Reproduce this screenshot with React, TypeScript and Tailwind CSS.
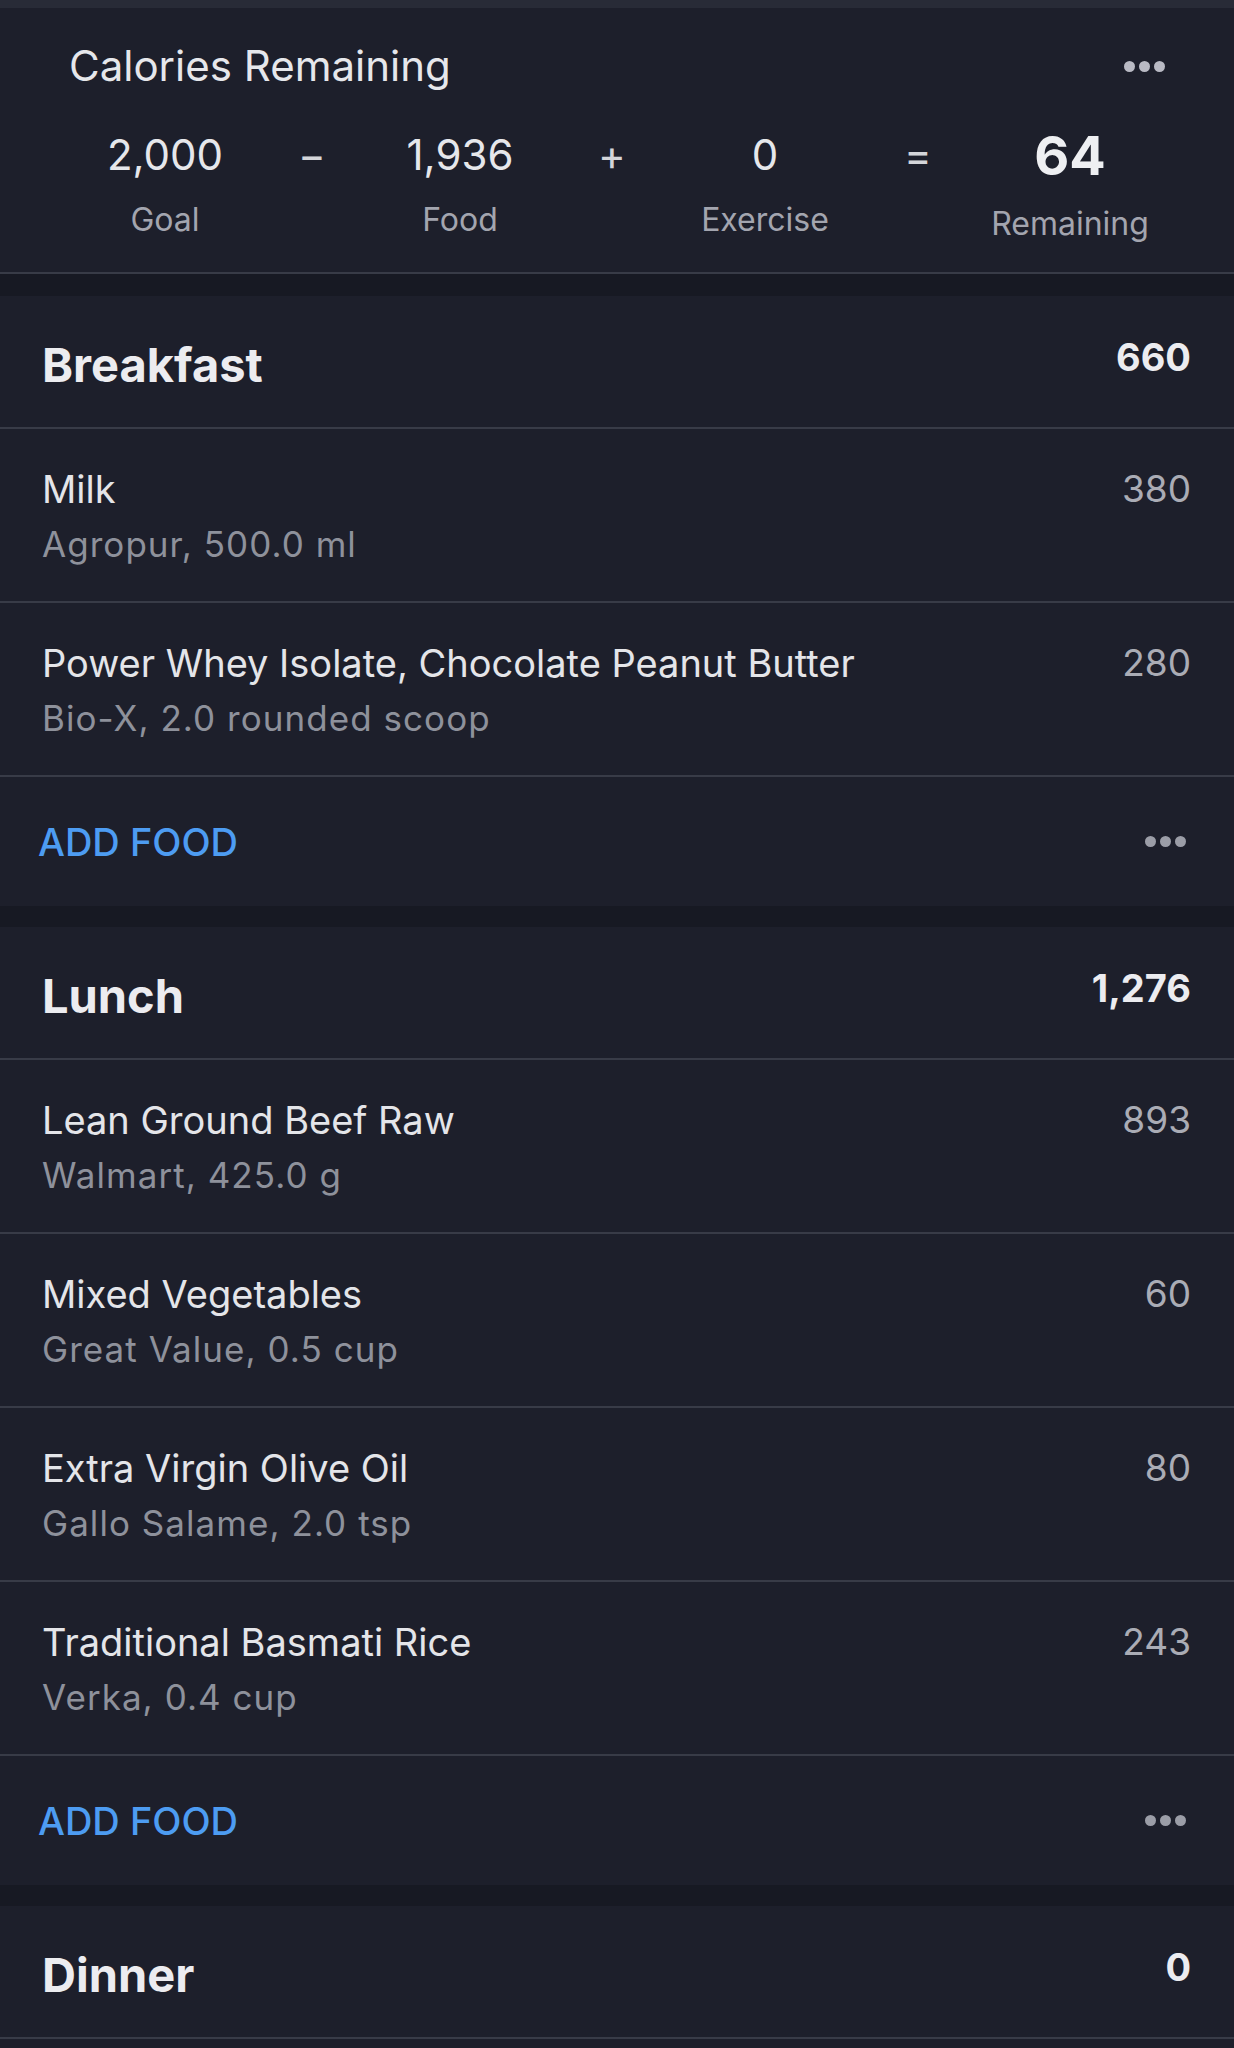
import * as React from 'react';

type Food = { name: string; detail: string; cal: string };

const breakfast: Food[] = [
  { name: 'Milk', detail: 'Agropur, 500.0 ml', cal: '380' },
  { name: 'Power Whey Isolate, Chocolate Peanut Butter', detail: 'Bio-X, 2.0 rounded scoop', cal: '280' },
];

const lunch: Food[] = [
  { name: 'Lean Ground Beef Raw', detail: 'Walmart, 425.0 g', cal: '893' },
  { name: 'Mixed Vegetables', detail: 'Great Value, 0.5 cup', cal: '60' },
  { name: 'Extra Virgin Olive Oil', detail: 'Gallo Salame, 2.0 tsp', cal: '80' },
  { name: 'Traditional Basmati Rice', detail: 'Verka, 0.4 cup', cal: '243' },
];

const Dots = ({ color }: { color: string }) => (
  <div className="flex items-center gap-[4px]">
    <span className={`block h-[11px] w-[11px] rounded-full ${color}`} />
    <span className={`block h-[11px] w-[11px] rounded-full ${color}`} />
    <span className={`block h-[11px] w-[11px] rounded-full ${color}`} />
  </div>
);

const Stat = ({ value, label, big }: { value: string; label: string; big?: boolean }) => (
  <div className="flex flex-col items-center">
    {big ? (
      <div className="mt-[3px] text-[54px] font-bold leading-none text-[#eeeff2]">{value}</div>
    ) : (
      <div className="mt-[8px] text-[42px] leading-none text-[#e6e7eb]">{value}</div>
    )}
    <div className={`${big ? 'mt-[25px]' : 'mt-[28px]'} text-[32px] leading-none text-[#a3a5af]`}>{label}</div>
  </div>
);

const Op = ({ sign }: { sign: string }) => (
  <div className="flex justify-center">
    <div className="mt-[8px] text-[42px] leading-none text-[#d4d5da]">{sign}</div>
  </div>
);

const MealSection = ({
  title,
  total,
  foods,
  last,
  first,
}: {
  title: string;
  total: string;
  foods: Food[];
  last?: boolean;
  first?: boolean;
}) => (
  <section className={`${first ? 'mt-[22px]' : 'mt-[21px]'} bg-[#1d1f2b]`}>
    <div className="flex h-[133px] items-start justify-between border-b-2 border-[#383b47] pl-[42px] pr-[43px] pt-[42px]">
      <h2 className="mt-[3px] text-[47px] font-bold leading-none text-[#ececf0]">{title}</h2>
      <span className="text-[38px] font-bold leading-none text-[#ececf0]">{total}</span>
    </div>
    {foods.map((food, index) => (
      <div
        key={index}
        className="flex h-[174px] items-start justify-between border-b-2 border-[#383b47] pl-[42px] pr-[43px] pt-[38px]"
      >
        <div>
          <div className="text-[38px] leading-[44px] text-[#e4e5e9]">{food.name}</div>
          <div className="mt-[13px] text-[35px] leading-[40px] tracking-[0.03em] text-[#8e919b]">{food.detail}</div>
        </div>
        <span className="text-[37px] leading-[44px] text-[#aaacb5]">{food.cal}</span>
      </div>
    ))}
    {last ? (
      <div className="h-[80px]" />
    ) : (
      <div className="flex h-[129px] items-center justify-between pl-[38px] pr-[48px]">
        <span className="text-[38px] font-medium leading-none text-[#4d9cf2]">ADD FOOD</span>
        <Dots color="bg-[#9b9da7]" />
      </div>
    )}
  </section>
);

export default function App() {
  return (
    <div className="min-h-screen bg-[#171923] pb-10 font-['Inter','Liberation_Sans',sans-serif]">
      <div className="h-[8px] bg-[#282b37]" />
      <section className="h-[266px] border-b-2 border-[#383b47] bg-[#1d1f2b]">
        <div className="flex items-center justify-between pl-[69px] pr-[69px] pt-[37px]">
          <h1 className="text-[42px] leading-none text-[#e6e7eb]">Calories Remaining</h1>
          <Dots color="bg-[#b9bac4]" />
        </div>
        <div className="mt-[39px] grid grid-cols-[152px_142px_154px_150px_156px_150px_154px] pl-[89px]">
          <Stat value="2,000" label="Goal" />
          <Op sign="−" />
          <Stat value="1,936" label="Food" />
          <Op sign="+" />
          <Stat value="0" label="Exercise" />
          <Op sign="=" />
          <Stat value="64" label="Remaining" big />
        </div>
      </section>
      <MealSection title="Breakfast" total="660" foods={breakfast} first />
      <MealSection title="Lunch" total="1,276" foods={lunch} />
      <MealSection title="Dinner" total="0" foods={[]} last />
    </div>
  );
}
